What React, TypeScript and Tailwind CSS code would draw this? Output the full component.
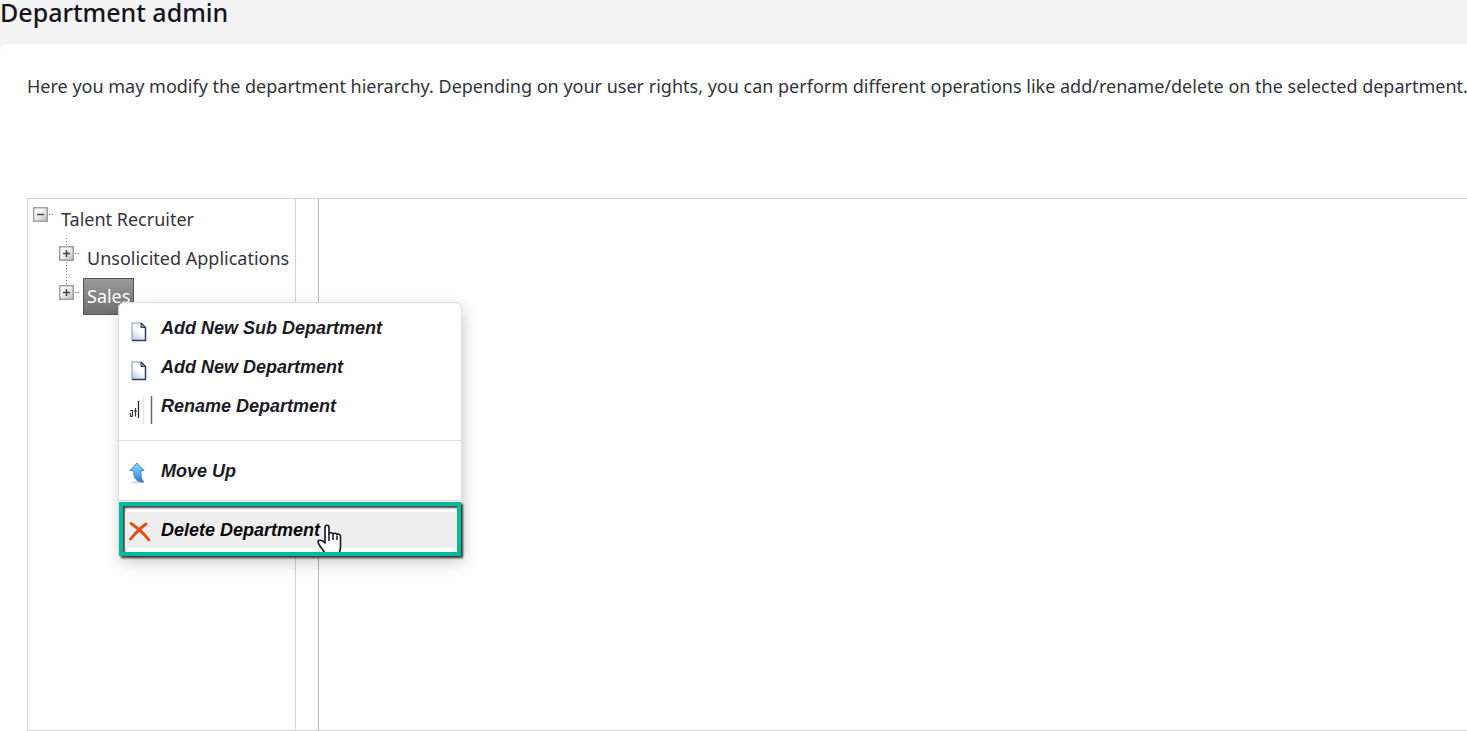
import type { ReactNode } from "react";

function Expander({ open = false }: { open?: boolean }) {
  return (
    <svg width="20" height="16" viewBox="0 0 20 16" className="shrink-0" aria-hidden="true">
      <defs>
        <linearGradient id="expander-fill" x1="0" y1="0" x2="1" y2="1">
          <stop offset="0.3" stopColor="#ffffff" />
          <stop offset="1" stopColor="#b9b9b9" />
        </linearGradient>
      </defs>
      <rect x="0.75" y="0.75" width="13.5" height="13.5" fill="url(#expander-fill)" stroke="#a0a0a0" strokeWidth="1.5" />
      <path d="M4 7.5h7" stroke="#444" strokeWidth="1.5" />
      {!open && <path d="M7.5 4v7" stroke="#444" strokeWidth="1.5" />}
      <path d="M16 7.5h4" stroke="#777" strokeDasharray="1.4 1.4" />
    </svg>
  );
}

function PageIcon() {
  return (
    <svg width="16" height="20" viewBox="0 0 16 20" aria-hidden="true">
      <defs>
        <linearGradient id="page-fill" x1="0.6" y1="0" x2="0.1" y2="1">
          <stop offset="0.4" stopColor="#ffffff" />
          <stop offset="1" stopColor="#b9c9e6" />
        </linearGradient>
      </defs>
      <path d="M1 1h9l4.5 4.5V18.5H1z" fill="url(#page-fill)" />
      <path d="M1 18V1h9" fill="none" stroke="#8593b0" />
      <path d="M10 1l4.5 4.5V18.5H1" fill="none" stroke="#2c3c63" strokeWidth="1.5" />
      <path d="M10 1v4.5h4.5z" fill="#8094bd" stroke="#2c3c63" />
    </svg>
  );
}

function RenameIcon() {
  return (
    <svg width="26" height="30" viewBox="0 0 26 30" aria-hidden="true">
      <path d="M1 15.5h2.5v6M1.5 18v3.500h2M6.500 13v8.500M5 16h3" fill="none" stroke="#333" strokeWidth="1.2" />
      <path d="M9.5 6v17" stroke="#222" strokeWidth="1.2" />
      <path d="M14.5 1v28" stroke="#e4e4e4" />
      <path d="M22.5 1v28" stroke="#666" strokeWidth="1.5" />
    </svg>
  );
}

function MoveUpIcon() {
  return (
    <svg width="18" height="22" viewBox="0 0 18 22" aria-hidden="true">
      <defs>
        <linearGradient id="arrow-fill" x1="0" y1="0" x2="0" y2="1">
          <stop offset="0" stopColor="#8ed2fa" />
          <stop offset="0.6" stopColor="#55abea" />
          <stop offset="1" stopColor="#2870c0" />
        </linearGradient>
      </defs>
      <ellipse cx="8" cy="20.3" rx="6" ry="1" fill="#d5d5d5" />
      <path
        d="M8 1l7 7.5h-3c0 5 0 9 3 11.5C8 20.5 4.5 17 4.5 8.5H1z"
        fill="url(#arrow-fill)"
        stroke="#3b86c8"
        strokeWidth="0.9"
        strokeLinejoin="round"
      />
    </svg>
  );
}

function DeleteIcon() {
  return (
    <svg width="22" height="20" viewBox="0 0 22 20" aria-hidden="true">
      <path d="M2 1.5C8 5.5 15 11.5 20 18" fill="none" stroke="#e84a14" strokeWidth="2.8" strokeLinecap="round" />
      <path d="M17 2C11 6 6 12 1.5 17" fill="none" stroke="#e84a14" strokeWidth="2.8" strokeLinecap="round" />
    </svg>
  );
}

function HandCursor() {
  return (
    <svg width="26" height="32" viewBox="0 0 26 32" aria-hidden="true">
      <path
        d="M8 19V3.500c0-3 4-3 4 0V10c0-2 4-1.500 4 .5 0-2 4-1.500 4 .5 0-1.500 3.500-1 3.500 1V23c0 4-1 5-2 8H8c0-3-3-6-5-9-1-2-2-3-2-4.500s4-2.500 7 1.500z"
        fill="#fff"
        stroke="#15151f"
        strokeWidth="1.6"
        strokeLinejoin="round"
      />
      <path d="M12 9v8M16 11v5M20 12v4" stroke="#15151f" strokeWidth="1.5" />
    </svg>
  );
}

function MenuItem({ icon, label }: { icon: ReactNode; label: string }) {
  return (
    <button
      type="button"
      role="menuitem"
      className="flex h-[39px] w-full items-center text-left whitespace-nowrap hover:bg-[#eee]"
    >
      <span className="mt-2 flex w-8 shrink-0 justify-start">{icon}</span>
      {label}
    </button>
  );
}

function ContextMenu() {
  return (
    <div
      role="menu"
      className="absolute top-6 left-[35px] z-10 w-[344px] rounded-md border border-[#dcdcdc] bg-white pt-[5px] font-['Liberation_Sans',Arial,sans-serif] text-lg font-bold text-[#1b1b25] italic shadow-[2px_6px_16px_rgba(0,0,0,0.2)]"
    >
      <div className="border-b border-[#ddd] pb-[15px] pl-[10px]">
        <MenuItem icon={<span className="pl-[2px]"><PageIcon /></span>} label="Add New Sub Department" />
        <MenuItem icon={<span className="pl-[2px]"><PageIcon /></span>} label="Add New Department" />
        <MenuItem icon={<RenameIcon />} label="Rename Department" />
      </div>
      <div className="border-b border-[#ddd] py-[10px] pl-[10px]">
        <MenuItem icon={<span className="pb-1"><MoveUpIcon /></span>} label="Move Up" />
      </div>
      <div className="mt-px border-4 border-[#04b99c] bg-white shadow-[2px_2px_2px_#333]">
        <div className="relative overflow-hidden pt-[6px] pb-1 shadow-[inset_2px_2px_2px_#444]">
          <button
            type="button"
            role="menuitem"
            className="ml-[2px] flex h-9 w-[332px] items-center bg-[#eee] pl-1 text-left whitespace-nowrap text-[#08080c]"
          >
            <span className="mt-1 flex w-8 shrink-0">
              <DeleteIcon />
            </span>
            Delete Department
          </button>
          <span className="pointer-events-none absolute top-[18px] left-[194px]">
            <HandCursor />
          </span>
        </div>
      </div>
    </div>
  );
}

function DepartmentTree() {
  return (
    <ul role="tree" className="pl-[5px] whitespace-nowrap">
      <li role="treeitem" aria-expanded="true">
        <div className="flex h-[39px] items-center">
          <span className="-mt-2 mr-2">
            <Expander open />
          </span>
          Talent Recruiter
        </div>
        <ul
          role="group"
          className="ml-[26px] bg-[linear-gradient(to_bottom,#777_1px,transparent_1px)] bg-[size:1px_3px] bg-[position:7px_0] bg-repeat-y"
        >
          <li role="treeitem" className="flex h-[39px] items-center">
            <span className="-mt-2 mr-2">
              <Expander />
            </span>
            Unsolicited Applications
          </li>
          <li
            role="treeitem"
            aria-selected="true"
            className="flex h-[39px] items-center bg-[linear-gradient(#fff,#fff)] bg-[size:12px_16px] bg-[position:0_23px] bg-no-repeat"
          >
            <span className="-mt-2 mr-1">
              <Expander />
            </span>
            <div className="relative">
              <span className="block border border-[#555] bg-linear-to-b from-[#999] to-[#707070] px-[3px] pt-[3px] pb-1 leading-7 text-white">
                Sales
              </span>
              <ContextMenu />
            </div>
          </li>
        </ul>
      </li>
    </ul>
  );
}

export default function App() {
  return (
    <div className="flex min-h-screen flex-col overflow-hidden bg-[#f3f3f3] font-['Noto_Sans','Segoe_UI',sans-serif] text-lg text-[#33333b]">
      <header className="h-11">
        <h1 className="text-[25px] leading-6 font-medium text-[#15151f]">Department admin</h1>
      </header>
      <main className="flex flex-1 flex-col rounded-tl-lg bg-white pt-7 pl-[27px]">
        <p className="leading-7 whitespace-nowrap">
          Here you may modify the department hierarchy. Depending on your user rights, you can perform different
          operations like add/rename/delete on the selected department.
        </p>
        <div className="mt-[98px] flex flex-1 border border-r-0 border-[#d4d4d4]">
          <aside className="w-[267px] shrink-0">
            <DepartmentTree />
          </aside>
          <div className="w-6 shrink-0 border-r border-l border-l-[#d4d4d4] border-r-[#b4b4b4]" />
          <section className="flex-1" aria-label="Department details" />
        </div>
      </main>
    </div>
  );
}
